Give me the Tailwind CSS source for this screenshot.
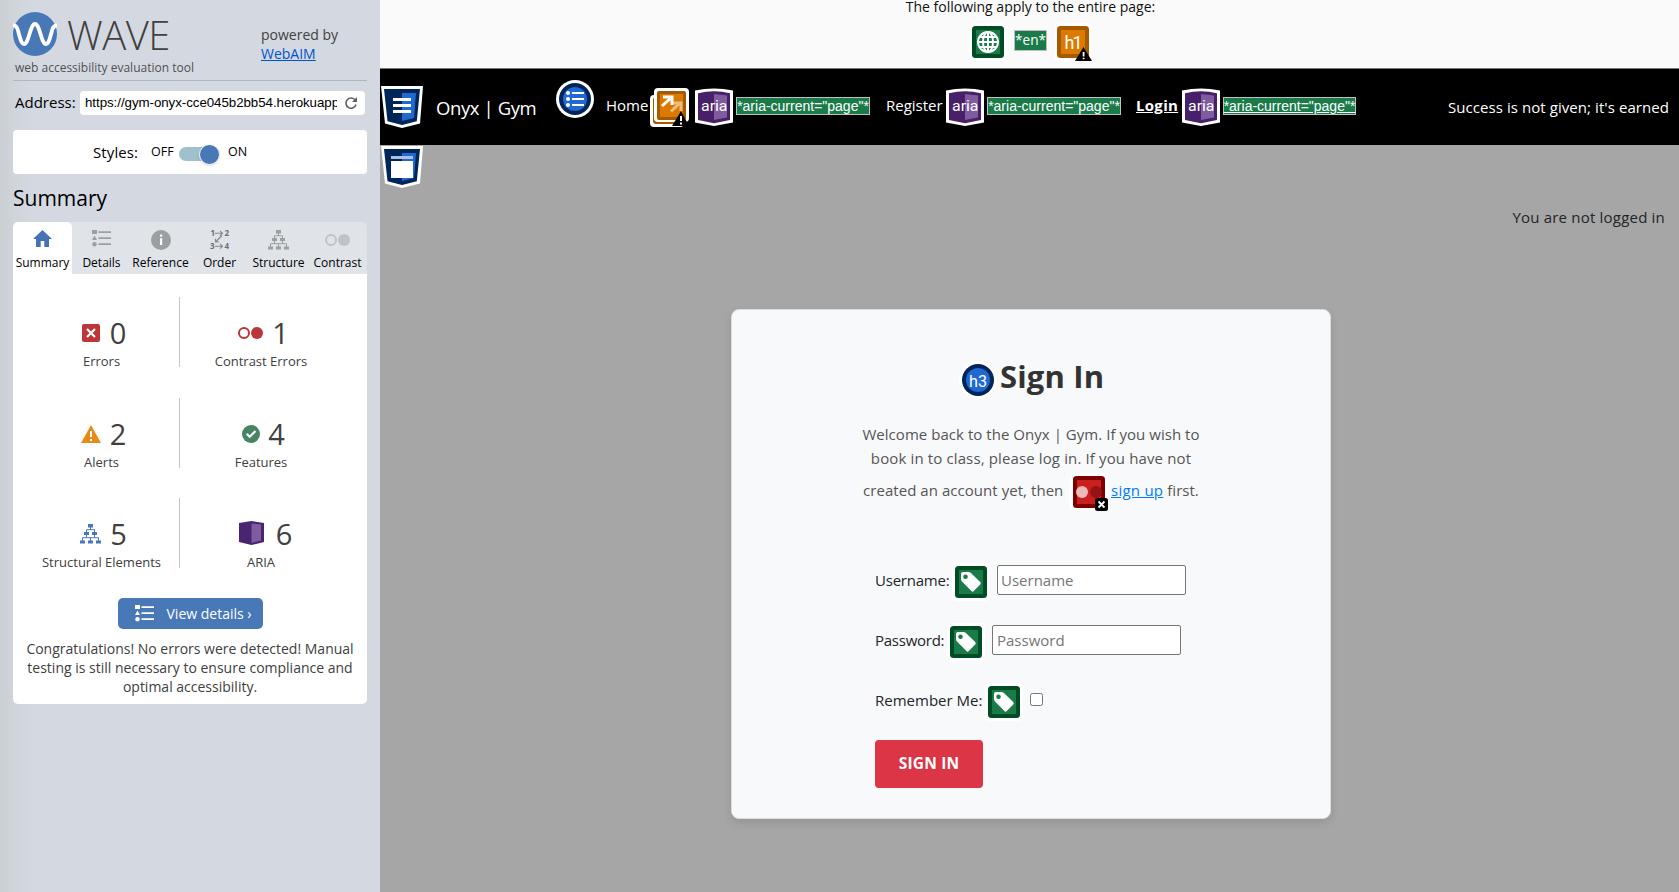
<!DOCTYPE html>
<html lang="en">
<head>
<meta charset="utf-8">
<title>WAVE Report</title>
<script src="https://cdn.jsdelivr.net/npm/@tailwindcss/browser@4"></script>
</head>
<body class="flex h-[892px] w-[1679px] overflow-hidden font-['Open_Sans',sans-serif]">
<svg class="hidden">
  <symbol id="list" viewBox="0 0 19 17"><path d="M0 0h5v4H0zM2.500 5.500L5 10H0z"/><circle cx="2.500" cy="14.200" r="2.200"/><path d="M6.500 1.300H19v1.800H6.500zM6.500 7.300H19v1.800H6.500zM6.500 13.300H19v1.800H6.500z"/></symbol>
  <symbol id="tree" viewBox="0 0 21 20"><path d="M8 0h5v3.500H8zM4 8h5v3H4zM12 8h5v3h-5zM0 16.500h5v3H0zM8 16.500h5v3H8zM16 16.500h5v3h-5z"/><path d="M10.500 3v3M6.500 8.500V5.700h8v2.800M6.500 11v2.500M14.500 11v2.500M2.500 17v-3.300h16V17M10.500 17v-3.300" fill="none" stroke="currentColor"/></symbol>
  <symbol id="aria" viewBox="0 0 38 38"><path d="M0 2.500Q19-1.500 38 2.500V34.500L19 38 0 34.500z" fill="#fff"/><path d="M3 5.200Q19 1.500 35 5.200V32L19 35.300 3 32z" fill="#472069"/><path d="M19 6l13 1.500v22L19 32z" fill="#7f5c9f"/><text x="6" y="22.500" font-family="Roboto" font-size="14.500" font-weight="400" textLength="26.500" lengthAdjust="spacingAndGlyphs" fill="#fff">aria</text></symbol>
  <symbol id="tag" viewBox="0 0 38 38"><rect width="38" height="38" rx="5" fill="#fff"/><rect x="3" y="3" width="32" height="32" rx="3.500" fill="#004d25"/><rect x="7" y="7" width="24" height="24" fill="#1a7b49"/><path fill-rule="evenodd" d="M9 11Q9 9 11 9h5q2 0 3.200 1.200l9 8.800q1.200 1.200 0 2.400l-6.400 6.700q-1.200 1.200-2.400 0l-8.900-9Q9 18 9 16zM13.500 11.500a2.300 2.300 0 1 0 0 4.600 2.300 2.300 0 0 0 0-4.600z" fill="#fff"/></symbol>
</svg>

<aside class="flex w-[380px] shrink-0 flex-col bg-[linear-gradient(90deg,#c9cfd2_0,#d0d5dc_16px,#d4d9e1_34px)] px-[13px] text-[#404040]">
  <header class="flex h-[81px] border-b border-[#b3b7bd]">
    <div class="w-[248px] pt-3">
      <div class="flex h-11 items-center">
        <svg class="size-11" viewBox="0 0 44 44"><circle cx="22" cy="22" r="22" fill="#4878b6"/><path d="M0 13.500C3 13 4 15 5 18.500c2.300 9 3.500 13.500 6 13.500 5 0 6-20 11-20s6 20 11 20c2.500 0 3.700-4.500 6-13.500 1-3.500 2-5 5-5" fill="none" stroke="#fff" stroke-width="3.800"/></svg>
        <span class="mt-[2px] ml-[10px] text-[40px] leading-[42px] font-light tracking-[-0.5px]">WAVE</span>
      </div>
      <div class="mt-1 pl-[2px] text-[12px] leading-4 whitespace-nowrap text-[#505050]">web accessibility evaluation tool</div>
    </div>
    <div class="pt-[25px] text-[14px] leading-[19px]">powered by<br><a class="text-[#0052cc] underline">WebAIM</a></div>
  </header>
  <div class="mt-[10px] flex h-6 items-center text-black">
    <label class="w-[67px] pb-[2px] pl-[2px] text-[15px] leading-5">Address:</label>
    <div class="flex h-6 w-[285px] items-center rounded-[4px] bg-white pl-[5px]">
      <div class="w-[252px] overflow-hidden font-['Liberation_Sans',sans-serif] text-[13.333px] tracking-[-0.06px] whitespace-nowrap">https://gym-onyx-cce045b2bb54.herokuapp</div>
      <svg class="ml-2 size-3" viewBox="0 0 12 12"><path d="M10.300 3.300A5.100 5.100 0 1 0 11 7.500" fill="none" stroke="#606060" stroke-width="1.600"/><path d="M12 0v5H7z" fill="#606060"/></svg>
    </div>
  </div>
  <div class="mt-[15px] flex h-11 items-center rounded-[4px] bg-white pl-20 text-black">
    <span class="w-[58px] text-[15px] tracking-[0.1px]">Styles:</span>
    <span class="mt-px w-7 text-[12.500px]">OFF</span>
    <span class="mt-1 flex h-[14px] w-[41px] items-center justify-end rounded-full bg-[#9fc1cc]"><span class="size-[21px] shrink-0 rounded-full border border-white bg-[#4878b6] shadow"></span></span>
    <span class="mt-px ml-[8px] text-[12.500px]">ON</span>
  </div>
  <h2 class="h-12 text-[21px] leading-[48px] text-black">Summary</h2>
  <nav class="grid h-[52px] shrink-0 grid-cols-6 rounded-t-[5px] bg-[#e0e4e9] text-center text-[12px] leading-4 text-black">
    <div class="flex flex-col items-center rounded-t-[5px] bg-white pt-2"><svg class="mb-2 h-[17px] w-[19px] text-[#4472b5]" viewBox="0 0 19 17" fill="currentColor"><path d="M9.500 0L19 9h-3v8h-4.700v-6H7.700v6H3V9H0z"/></svg>Summary</div>
    <div class="flex flex-col items-center pt-2"><svg class="mb-2 h-[17px] w-[19px] text-[#9c9fa2]" fill="currentColor"><use href="#list"/></svg>Details</div>
    <div class="flex flex-col items-center pt-2"><svg class="mb-[5px] size-5" viewBox="0 0 20 20"><circle cx="10" cy="10" r="10" fill="#9c9fa2"/><path d="M9 4.500h2.200v2.200H9zM9 8.300h2.200V15H9z" fill="#fff"/></svg>Reference</div>
    <div class="flex flex-col items-center pt-2"><svg class="mb-[5px] size-5" viewBox="0 0 20 20"><g font-family="Open Sans" font-size="8" font-weight="700" fill="#6c6f72"><text x="0.500" y="6">1</text><text x="14.500" y="6">2</text><text x="0" y="19">3</text><text x="14.500" y="19">4</text></g><path d="M5 3.200h7.500M10 .8l2.500 2.400L10 5.600M5 16.200h7.500M10 13.800l2.500 2.400-2.500 2.400M12 5.500L5.500 12M5.500 8.800V12H9" fill="none" stroke="#85888b" stroke-width="1.100"/></svg>Order</div>
    <div class="flex flex-col items-center pt-2"><svg class="mb-[5px] h-5 w-[21px] text-[#9c9fa2]" fill="currentColor"><use href="#tree"/></svg>Structure</div>
    <div class="flex flex-col items-center pt-2"><svg class="mb-[5px] h-5 w-[25px]" viewBox="0 0 25 20"><circle cx="6" cy="10" r="5" fill="none" stroke="#bfc2c6" stroke-width="2"/><circle cx="19" cy="10" r="6" fill="#bfc2c6"/></svg>Contrast</div>
  </nav>
  <section class="flex h-[430px] flex-col items-center rounded-b-[5px] bg-white">
    <div class="mt-[23px] ml-[-16px] grid grid-cols-[158px_162px] gap-y-[30.600px] text-center text-[13px] leading-5">
      <div class="flex h-[70px] flex-col items-center border-r border-[#c4c4c4] pt-[18px] pl-[2px]"><div class="flex h-9 shrink-0 items-center gap-[10px] pl-[5px]"><svg class="size-[18px]" viewBox="0 0 18 18"><rect width="18" height="18" rx="2" fill="#bb3539"/><path d="M5 5l8 8M13 5l-8 8" stroke="#fff" stroke-width="2.200"/></svg><span class="text-[29px]">0</span></div>Errors</div>
      <div class="flex h-[70px] flex-col items-center pt-[18px]"><div class="flex h-9 shrink-0 items-center gap-[9px] pl-[5px]"><svg class="h-[18px] w-[25px]" viewBox="0 0 25 18"><circle cx="6" cy="9" r="5" fill="none" stroke="#bb3539" stroke-width="2"/><circle cx="19" cy="9" r="6" fill="#bb3539"/></svg><span class="text-[29px]">1</span></div>Contrast Errors</div>
      <div class="flex h-[70px] flex-col items-center border-r border-[#c4c4c4] pt-[18px] pl-[2px]"><div class="flex h-9 shrink-0 items-center gap-[9px] pl-[4px]"><svg class="h-[18px] w-5" viewBox="0 0 20 18"><path d="M10 0l10 18H0z" fill="#e58b1a"/><path d="M9 6h2v6H9zM9 14h2v2H9z" fill="#fff"/></svg><span class="text-[29px]">2</span></div>Alerts</div>
      <div class="flex h-[70px] flex-col items-center pt-[18px]"><div class="flex h-9 shrink-0 items-center gap-[8px] pl-[5px]"><svg class="size-[18px]" viewBox="0 0 18 18"><circle cx="9" cy="9" r="9" fill="#458563"/><path d="M4.700 8.800l3 3L13.500 6" fill="none" stroke="#fff" stroke-width="2.200"/></svg><span class="text-[29px]">4</span></div>Features</div>
      <div class="flex h-[70px] flex-col items-center border-r border-[#c4c4c4] pt-[18px] pl-[2px]"><div class="flex h-9 shrink-0 items-center gap-[9px] pl-[4px]"><svg class="h-5 w-[21px] text-[#4878b6]" fill="currentColor"><use href="#tree"/></svg><span class="text-[29px]">5</span></div>Structural Elements</div>
      <div class="flex h-[70px] flex-col items-center pt-[18px]"><div class="flex h-9 shrink-0 items-center gap-[12px] pl-[9px]"><svg class="mb-[2px] h-6 w-[25px]" viewBox="0 0 25 24"><path d="M0 2l12.500-2L25 2v19l-12.500 3L0 21z" fill="#4a2470"/><path d="M12.500 2.500L22 3.500v16l-9.500 2.500z" fill="#7f5c9f"/></svg><span class="text-[29px]">6</span></div>ARIA</div>
    </div>
    <div class="mt-[30px] flex h-[31px] w-[145px] shrink-0 items-center rounded-[5px] bg-[#4878b6] pl-[17px] text-[14px] text-white"><svg class="mr-[13px] h-[17px] w-[19px]" fill="currentColor"><use href="#list"/></svg><span class="mb-px whitespace-nowrap">View details ›</span></div>
    <p class="mt-[10px] text-center text-[14px] leading-[19px] whitespace-nowrap">Congratulations! No errors were detected! Manual<br>testing is still necessary to ensure compliance and<br>optimal accessibility.</p>
  </section>
</aside>

<div class="flex min-w-0 flex-1 flex-col bg-[#a6a6a6]">
  <div class="flex h-[69px] flex-col items-center border-b border-[#6f776f] bg-[#fafafa]">
    <p class="mt-[-4px] ml-[2px] h-[21px] text-[14px] leading-[21px] text-[#111]">The following apply to the entire page:</p>
    <div class="mt-[6px] ml-[2px] flex">
      <svg class="h-[38px] w-[38px]" viewBox="0 0 38 38"><rect width="38" height="38" rx="5" fill="#fff"/><rect x="3" y="3" width="32" height="32" rx="3.500" fill="#004d25"/><rect x="7" y="7" width="24" height="24" fill="#1a7b49"/><g fill="none" stroke="#fff" stroke-width="2"><circle cx="19" cy="19" r="10"/><ellipse cx="19" cy="19" rx="5" ry="10"/><path d="M19 9v20M9 19h20M11 14h16M11 24h16"/></g></svg>
      <span class="mt-[7px] ml-[7px] flex h-[21px] w-[33px] items-center justify-center border border-[#c0c0c0] bg-[#1a7b49] text-[13.600px] text-white">*en*</span>
      <svg class="ml-[7px] h-[38px] w-[38px]" viewBox="0 0 38 38"><rect width="38" height="38" rx="5" fill="#fff"/><rect x="3" y="3" width="32" height="32" rx="3.500" fill="#a65a00"/><rect x="7" y="7" width="24" height="24" fill="#dc7a00"/><text x="10.500" y="25.500" font-family="Roboto" font-size="18" textLength="18" fill="#fff">h1</text><path d="M29.500 24L38 38H21z"/><path d="M28.700 29h1.800v4.500h-1.800zM28.700 34.700h1.800v1.600h-1.800z" fill="#fff"/></svg>
    </div>
  </div>
  <nav class="flex h-[76px] shrink-0 bg-black text-[15px] leading-6 whitespace-nowrap text-white">
    <svg class="mt-[17px] ml-px size-[42px]" viewBox="0 0 42 42"><path d="M0 0h42l-3 37.500L21 42 4 37.500z" fill="#fff"/><path d="M3 3h36l-3.200 32.300L21 39 6.500 35.300z" fill="#002659"/><path d="M21 7h14l-2 25-12 3z" fill="#1f69d0"/><path d="M12 12h18v3H12zM12 18h18v3H12zM12 24h18v3H12z" fill="#fff"/></svg>
    <a class="mt-[27px] ml-[13px] w-[120px] text-[18.500px] tracking-[-0.4px]">Onyx | Gym</a>
    <svg class="mt-[11px] size-[38px]" viewBox="0 0 38 38"><circle cx="19" cy="19" r="19" fill="#fff"/><circle cx="19" cy="19" r="16" fill="#002659"/><circle cx="19" cy="19" r="12" fill="#1f69d0"/><path d="M16 12h12v2H16zM16 18h12v2H16zM16 24h12v2H16z" fill="#fff"/><g fill="#fff"><circle cx="12" cy="13" r="2"/><circle cx="12" cy="19" r="2"/><circle cx="12" cy="25" r="2"/></g></svg>
    <a class="mt-[24px] ml-[12px] w-[44px]">Home</a>
    <svg class="mt-[19px] h-10 w-10" viewBox="0 0 40 40"><rect y="7" width="34" height="32" rx="4" fill="#fff"/><rect x="3" y="9" width="28" height="27" rx="3" fill="#a65a00"/><rect x="4" width="35" height="34" rx="4" fill="#fff"/><rect x="7" y="3" width="29" height="29" rx="2" fill="#a65a00"/><rect x="10" y="6" width="23" height="23" fill="#dc7a00"/><path d="M21 23.500L31 14M23 15h8v8" fill="none" stroke="#edbd80" stroke-width="3"/><path d="M12 18L22 9M13 9h9v8" fill="none" stroke="#fff" stroke-width="3"/><path d="M31 23l8 15H22z"/><path d="M30 28h2v5h-2zM30 34.500h2v2h-2z" fill="#fff"/></svg>
    <svg class="mt-[19px] ml-[5px] size-[38px]"><use href="#aria"/></svg>
    <span class="mt-[28px] ml-[3px] flex h-[18px] w-[134px] items-center justify-center border border-[#c0c0c0] bg-[#1a7b49] font-['Liberation_Sans',sans-serif] text-[14px]">*aria-current="page"*</span>
    <a class="mt-[24px] ml-[16px] w-[60px]">Register</a>
    <svg class="mt-[19px] size-[38px]"><use href="#aria"/></svg>
    <span class="mt-[28px] ml-[3px] flex h-[18px] w-[134px] items-center justify-center border border-[#c0c0c0] bg-[#1a7b49] font-['Liberation_Sans',sans-serif] text-[14px]">*aria-current="page"*</span>
    <a class="mt-[24px] ml-[15px] w-[46px] font-bold tracking-[0.3px] underline">Login</a>
    <svg class="mt-[19px] size-[38px]"><use href="#aria"/></svg>
    <span class="mt-[28px] ml-[3px] flex h-[18px] w-[133px] items-center justify-center border border-[#c0c0c0] bg-[#1a7b49] font-['Liberation_Sans',sans-serif] text-[14px] underline">*aria-current="page"*</span>
    <span class="mt-[26px] mr-[10px] ml-auto tracking-[0.07px]">Success is not given; it's earned</span>
  </nav>
  <main class="flex flex-1 flex-col items-center text-[15px] whitespace-nowrap">
    <div class="flex h-[164px] w-full justify-between"><svg class="mt-px ml-px size-[42px]" viewBox="0 0 42 42"><path d="M0 0h42l-3 37.500L21 42 4 37.500z" fill="#fff"/><path d="M3 3h36l-3.200 32.300L21 39 6.500 35.300z" fill="#002659"/><path d="M21 7h14l-2 25-12 3z" fill="#1f69d0"/><path d="M10 10h22v3H10z" fill="#b0bfdb"/><path d="M10 15h22v17H10z" fill="#fff"/></svg>
      <p class="mt-[60px] mr-[14px] leading-6 tracking-[0.2px] text-[#212529]">You are not logged in</p></div>
    <section class="ml-[3px] h-[510px] w-[600px] rounded-[8px] border border-[#dcdcdc] bg-[#f8f9fb] shadow-[0_4px_8px_rgba(0,0,0,0.1)]">
      <h3 class="mt-[42px] ml-[227px] flex h-12 items-center text-[31px] leading-[48px] font-bold text-[#333]"><svg class="mt-[7px] mr-[3px] size-[38px]" viewBox="0 0 38 38"><circle cx="19" cy="19" r="19" fill="#fff"/><circle cx="19" cy="19" r="16" fill="#002659"/><circle cx="19" cy="19" r="12" fill="#1f69d0"/><text x="10" y="25.500" font-family="Roboto" font-weight="400" font-size="17" textLength="18" lengthAdjust="spacingAndGlyphs" fill="#fff">h3</text></svg><span class="tracking-[0.15px]">Sign In</span></h3>
      <div class="mt-[22px] text-[#555]">
        <p class="text-center leading-6"><span class="tracking-[0.04px]">Welcome back to the Onyx | Gym. If you wish to</span><br><span class="tracking-[0.13px]">book in to class, please log in. If you have not</span></p>
        <div class="mt-[3px] ml-[131px] flex h-[38px] items-center"><span class="w-[207px] pb-1 tracking-[0.05px]">created an account yet, then</span><svg class="mr-[3px] h-[38px] w-[38px]" viewBox="0 0 38 38"><rect width="38" height="38" rx="5" fill="#fff"/><rect x="3" y="3" width="32" height="32" rx="3.500" fill="#7d0000"/><rect x="7" y="7" width="24" height="24" fill="#ca1f1f"/><circle cx="12" cy="19" r="6" fill="#eeb9b9"/><circle cx="26" cy="19" r="6" fill="#921414"/><rect x="25" y="25" width="13" height="13" rx="2.500"/><path d="M28.500 28.500l6 6M34.500 28.500l-6 6" stroke="#fff" stroke-width="1.800"/></svg><a class="mb-1 tracking-[0.25px] text-[#007bff] underline">sign up</a><span class="ml-[4px] pb-1">first.</span></div>
      </div>
      <form class="ml-[143px] text-[#212529]">
        <div class="mt-[52px] flex h-[38px]"><label class="mt-[5px] w-[77px] leading-6 tracking-[-0.22px]">Username:</label><svg class="size-[38px]"><use href="#tag"/></svg><input class="mt-[2px] ml-[7px] h-[30px] w-[189px] rounded-[2px] border border-[#767676] bg-white px-[3px] placeholder:text-[#757575]" placeholder="Username"></div>
        <div class="mt-[22px] flex h-[38px]"><label class="mt-[5px] w-[72px] leading-6 tracking-[-0.25px]">Password:</label><svg class="size-[38px]"><use href="#tag"/></svg><input class="mt-[2px] ml-[7px] h-[30px] w-[189px] rounded-[2px] border border-[#767676] bg-white px-1 placeholder:text-[#757575]" placeholder="Password"></div>
        <div class="mt-[22px] flex h-[38px]"><label class="mt-[5px] w-[110px] leading-6">Remember Me:</label><svg class="size-[38px]"><use href="#tag"/></svg><span class="mt-[10px] ml-[7px] size-[13px] rounded-[2.500px] border border-[#767676] bg-white"></span></div>
        <button type="button" class="mt-[19px] h-12 w-[108px] rounded-[4px] bg-[#dc3545] text-[15.500px] font-bold tracking-[0.2px] text-white">SIGN IN</button>
      </form>
    </section>
  </main>
</div>
</body>
</html>
